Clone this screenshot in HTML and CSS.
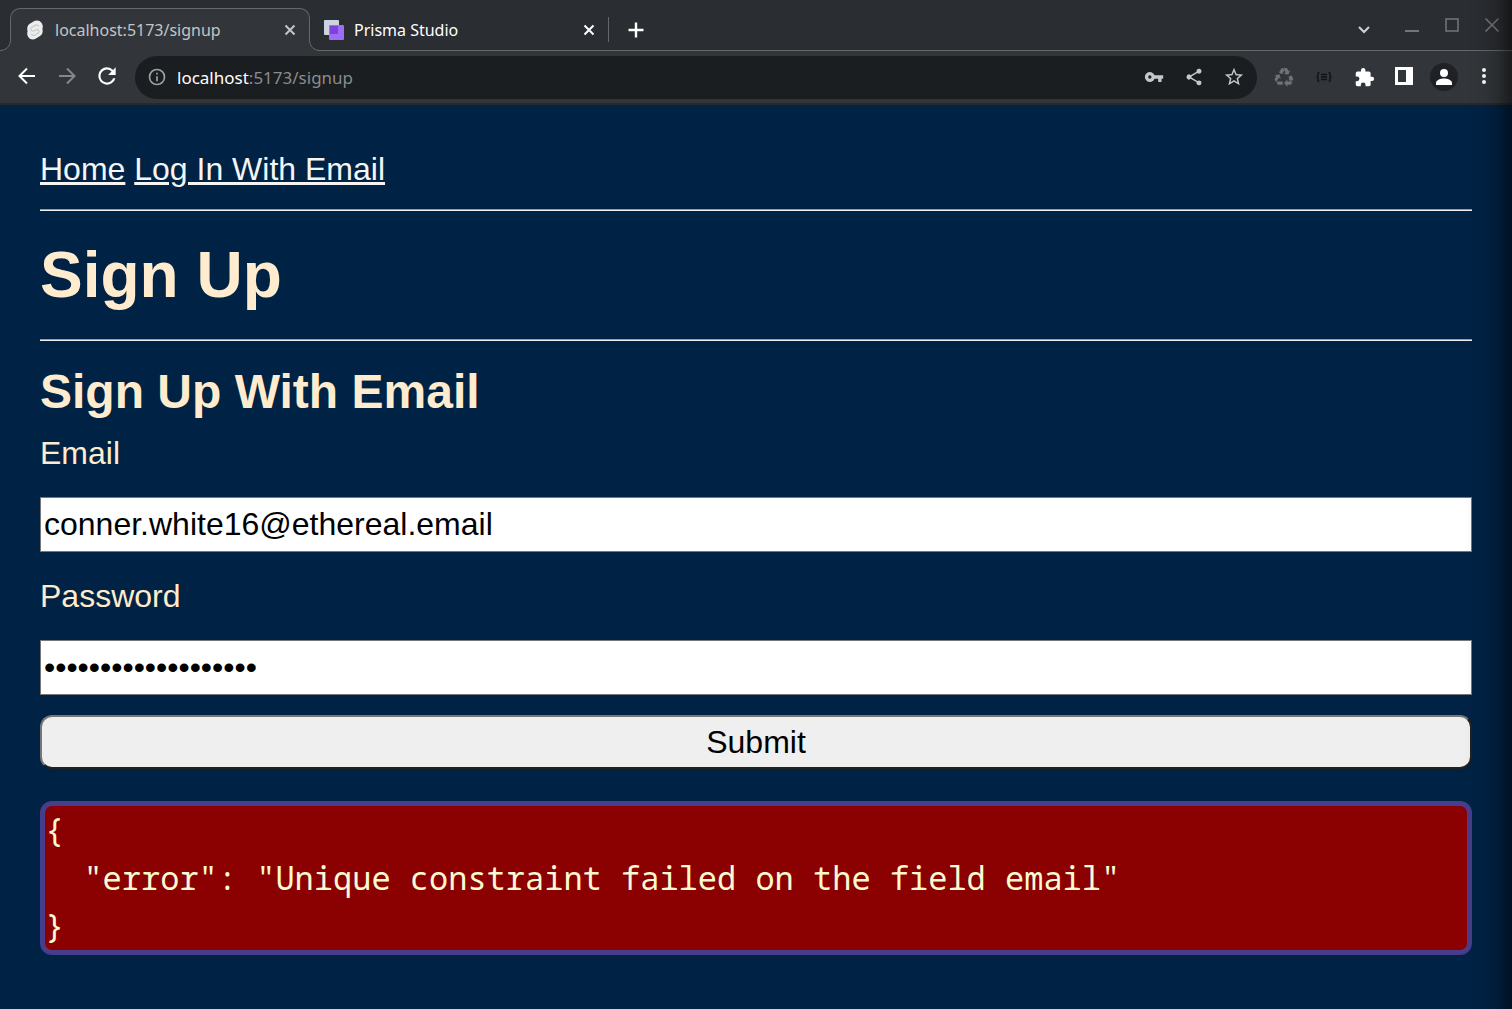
FILE: index.html
```html
<!DOCTYPE html>
<html lang="en">
<head>
<meta charset="utf-8">
<meta name="viewport" content="width=device-width, initial-scale=1">
<title>Sign Up</title>
<link rel="stylesheet" href="styles.css">
</head>
<body>
<div class="window">
  <header class="chrome">
    <div class="tab-strip">
      <div class="tab tab-active">
        <svg class="foot foot-left" width="11" height="11" viewBox="0 0 11 11" aria-hidden="true"><path d="M11 0v11H0v-.5A10 10 0 0 0 10.500 0z" fill="#32363a"/><path d="M0 10.500A10 10 0 0 0 10.500 0" fill="none" stroke="#66696c"/></svg>
        <svg class="foot foot-right" width="11" height="11" viewBox="0 0 11 11" aria-hidden="true"><path d="M0 0v11h11v-.5A10 10 0 0 1 .5 0z" fill="#32363a"/><path d="M11 10.500A10 10 0 0 1 .5 0" fill="none" stroke="#66696c"/></svg>
        <svg class="icon" width="20" height="20" viewBox="0 0 20 20" aria-hidden="true"><path d="M8 1.800C11 0 14.500 0 16.800 3.200c1.200 2 1.200 3.700.6 5.500.5 2.300.6 5.300-2.400 7.300l-4 2.600c-3 1.700-6 1-7.800-1.600-1.200-2-1.200-3.700-.6-5.500C1.900 9 2 6 4.400 4z" fill="#ececec"/><path d="M13.800 6.500c-1-1.700-2.500-2-4-1L7 7.300c-2 1.500-1 3.900 1 3.700 1.800 0 3.500-2.300 5.200-1.200 1.300 1 .8 2.700-.4 3.500L10 15c-1.600.9-3 .5-3.800-1.200" fill="none" stroke="#c8c9ca" stroke-width="1.200"/></svg>
        <span class="tab-title">localhost:5173/signup</span>
        <button class="tab-close" type="button" aria-label="Close localhost tab"><svg width="12" height="12" viewBox="0 0 12 12" stroke="currentColor" stroke-width="2"><path d="M1.500 1.500l9 9M10.500 1.500l-9 9"/></svg></button>
      </div>
      <div class="tab tab-idle">
        <svg class="icon" width="20" height="20" viewBox="0 0 20 20" aria-hidden="true"><rect x="0" y="0" width="15" height="15" rx="1" fill="#cbd5e0"/><rect x="5" y="5" width="15" height="15" rx="1" fill="#9f6cf5"/><path d="M6 6h8v8H6z" fill="#7f40dd"/></svg>
        <span class="tab-title">Prisma Studio</span>
        <button class="tab-close" type="button" aria-label="Close Prisma Studio tab"><svg width="12" height="12" viewBox="0 0 12 12" stroke="currentColor" stroke-width="2"><path d="M1.500 1.500l9 9M10.500 1.500l-9 9"/></svg></button>
      </div>
      <button class="new-tab" type="button" aria-label="New tab"><svg width="16" height="16" viewBox="0 0 16 16" stroke="currentColor" stroke-width="2.400"><path d="M8 .5v15M.5 8h15"/></svg></button>
      <div class="window-controls">
        <button type="button" class="control search-tabs" aria-label="Search tabs"><svg width="20" height="20" viewBox="0 0 20 20" fill="none" stroke="currentColor" stroke-width="2"><path d="M5 12l5 5 5-5"/></svg></button>
        <button type="button" class="control" aria-label="Minimize"><svg width="20" height="20" viewBox="0 0 20 20" stroke="currentColor" stroke-width="2"><path d="M3 16h14"/></svg></button>
        <button type="button" class="control" aria-label="Maximize"><svg width="20" height="20" viewBox="0 0 20 20" fill="none" stroke="currentColor" stroke-width="1.500"><path d="M4 4h12v12H4z"/></svg></button>
        <button type="button" class="control" aria-label="Close window"><svg width="20" height="20" viewBox="0 0 20 20" stroke="currentColor" stroke-width="1.700"><path d="M3.500 3.500l13 13M16.500 3.500l-13 13"/></svg></button>
      </div>
    </div>
    <div class="toolbar">
      <div class="history">
        <button type="button" class="control" aria-label="Back"><svg width="20" height="20" viewBox="0 0 20 20" fill="none" stroke="currentColor" stroke-width="2"><path d="M18 10H3M10 2.500L2.500 10l7.500 7.500"/></svg></button>
        <button type="button" class="control muted" aria-label="Forward"><svg width="20" height="20" viewBox="0 0 20 20" fill="none" stroke="currentColor" stroke-width="2"><path d="M2 10h15M10 2.500l7.500 7.500-7.500 7.500"/></svg></button>
        <button type="button" class="control" aria-label="Reload"><svg width="26" height="26" viewBox="0 0 24 24" fill="currentColor"><path d="M17.650 6.350A7.950 7.950 0 0 0 12 4a8 8 0 1 0 7.730 10h-2.080A6 6 0 1 1 12 6c1.660 0 3.140.69 4.220 1.780L13 11h7V4z"/></svg></button>
      </div>
      <div class="omnibox">
        <svg class="icon" width="20" height="20" viewBox="0 0 24 24" fill="#9aa0a6" aria-hidden="true"><path d="M11 7h2v2h-2zm0 4h2v6h-2zm1-9a10 10 0 1 0 0 20 10 10 0 0 0 0-20zm0 18a8 8 0 1 1 0-16 8 8 0 0 1 0 16z"/></svg>
        <div class="address"><span class="host">localhost</span>:5173/signup</div>
        <button type="button" class="control" aria-label="Passwords"><svg width="20" height="20" viewBox="0 0 24 24" fill="currentColor"><path d="M12.650 10a6 6 0 1 0 0 4H17v4h4v-4h2v-4zM7 14a2 2 0 1 1 0-4 2 2 0 0 1 0 4z"/></svg></button>
        <button type="button" class="control" aria-label="Share"><svg width="20" height="20" viewBox="0 0 24 24" fill="currentColor"><path d="M18 16.080c-.76 0-1.440.3-1.960.77L8.910 12.700a3.300 3.300 0 0 0 0-1.400l7.050-4.110A3 3 0 1 0 15.090 5.700L8.040 9.810a3 3 0 1 0 0 4.380l7.120 4.160A2.920 2.920 0 1 0 18 16.080z"/></svg></button>
        <button type="button" class="control" aria-label="Bookmark"><svg width="22" height="22" viewBox="0 0 24 24" fill="currentColor"><path d="M22 9.240l-7.190-.62L12 2 9.190 8.630 2 9.240l5.460 4.730L5.820 21 12 17.270 18.180 21l-1.630-7.030zM12 15.400l-3.760 2.270 1-4.280-3.320-2.880 4.380-.38L12 6.100l1.710 4.040 4.380.38-3.320 2.880 1 4.280z"/></svg></button>
      </div>
      <div class="extensions">
        <button type="button" class="control recycle" aria-label="Recycle"><svg width="20" height="20" viewBox="0 0 20 20" fill="currentColor"><path d="M5 5.500L7.500 1.200H9L10.500 3 8 7.300zM9.800 1h3l1.700 3 1.700-.8-1.800 4.600-4.800-1 1.900-1zM14.700 9.800l2.600-1.500 2 3.500-.8 1.700-3.300.2zM18.700 14.500l-1.800 3.200h-3.500v2.100L10 16.100l3.400-3.600v2zM8.700 14.600v3.100H4l-1.200-1.600.8-1.500zM2.200 15.300l-1.700-3 1.700-2.900-1.700-1L5.400 7.200l1.400 4.600-1.900-1z"/></svg></button>
        <button type="button" class="control json" aria-label="JSON viewer"><svg width="18" height="14" viewBox="0 0 18 14" fill="none" stroke="currentColor" stroke-width="1.400"><path d="M4.500 2.500H4c-1.500 0-1 1.500-1 3 0 1-.5 1.500-1.500 1.500C2.500 7 3 7.500 3 8.500c0 1.500-.5 3 1 3h.5M13.500 2.500h.5c1.500 0 1 1.500 1 3 0 1 .5 1.500 1.500 1.500-1 0-1.500.5-1.500 1.500 0 1.500.5 3-1 3h-.5M6 4.500h6M6 7h6M6 9.500h6"/></svg></button>
        <button type="button" class="control" aria-label="Extensions"><svg width="21" height="21" viewBox="0 0 24 24" fill="currentColor"><path d="M20.500 11H19V7a2 2 0 0 0-2-2h-4V3.500a2.500 2.500 0 0 0-5 0V5H4a2 2 0 0 0-2 2v3.800h1.500a2.700 2.700 0 0 1 0 5.400H2V20c0 1.100.9 2 2 2h3.800v-1.500a2.700 2.700 0 0 1 5.400 0V22H17a2 2 0 0 0 2-2v-4h1.500a2.500 2.500 0 0 0 0-5z"/></svg></button>
        <button type="button" class="control" aria-label="Side panel"><svg width="20" height="20" viewBox="0 0 20 20"><path d="M1 0h18v18H1z" fill="#fff"/><path d="M4 3h8v12H4z" fill="#32363a"/></svg></button>
        <button type="button" class="control" aria-label="Profile"><svg width="28" height="28" viewBox="0 0 28 28"><circle cx="14" cy="14" r="14" fill="#202124"/><circle cx="14" cy="10" r="4" fill="#fff"/><path d="M6 22v-2c0-3.300 5-4.500 8-4.500s8 1.200 8 4.500v2z" fill="#fff"/></svg></button>
        <button type="button" class="control" aria-label="Menu"><svg width="20" height="20" viewBox="0 0 20 20" fill="currentColor"><circle cx="10" cy="3" r="2"/><circle cx="10" cy="9" r="2"/><circle cx="10" cy="15" r="2"/></svg></button>
      </div>
    </div>
  </header>
  <main class="page">
    <nav class="nav"><a href="#home">Home</a> <a href="#login">Log In With Email</a></nav>
    <hr class="rule">
    <h1 class="title">Sign Up</h1>
    <hr class="rule">
    <h2 class="subtitle">Sign Up With Email</h2>
    <form class="form">
      <label for="email">Email</label>
      <input class="field" id="email" type="email" value="conner.white16@ethereal.email">
      <label for="password">Password</label>
      <input class="field" id="password" type="password" value="abcdefghijklmnopqrs">
      <button class="submit" type="submit">Submit</button>
    </form>
    <pre class="result">{
  "error": "Unique constraint failed on the field email"
}</pre>
  </main>
</div>
</body>
</html>
```
FILE: styles.css
```css
* {
  box-sizing: border-box;
}

body {
  margin: 0;
  background: #002244;
}

.window {
  position: relative;
  min-height: 100vh;
}

/* shade along the right edge of the window */
.window::after {
  content: "";
  position: absolute;
  top: 0;
  right: 0;
  bottom: 0;
  width: 48px;
  background: linear-gradient(to right, rgba(0, 0, 0, 0), rgba(0, 0, 0, 0.05) 40%, rgba(0, 0, 0, 0.18) 70%, rgba(0, 0, 0, 0.5));
  pointer-events: none;
}

.chrome {
  font-family: "Noto Sans", sans-serif;
  color: #fff;
}

.chrome button {
  display: flex;
  align-items: center;
  justify-content: center;
  padding: 0;
  border: 0;
  background: none;
  color: inherit;
}

.chrome svg {
  flex: none;
}

.tab-strip {
  display: flex;
  height: 51px;
  padding: 8px 0 0 10px;
  border-bottom: 1px solid #66696c;
  background: #2a2d31;
}

.tab {
  display: flex;
  align-items: center;
  font-size: 16px;
}

.tab-title {
  flex: 1;
  padding-left: 10px;
}

.tab-active {
  position: relative;
  width: 300px;
  height: 43px;
  padding: 0 13px 0 14px;
  border: 1px solid #66696c;
  border-bottom: 0;
  border-radius: 10px 10px 0 0;
  background: #32363a;
  color: #c3c5c6;
}

/* outward curves at the foot of the active tab */
.foot {
  position: absolute;
  bottom: 0;
}

.foot-left {
  left: -11px;
}

.foot-right {
  right: -11px;
}

.tab-idle {
  width: 299px;
  height: 43px;
  padding: 0 14px;
}

.tab-idle::after {
  content: "";
  width: 1px;
  height: 25px;
  margin: 0 -14px 0 13px;
  background: #66696c;
}

.new-tab {
  width: 54px;
  height: 43px;
}

.window-controls {
  display: flex;
  gap: 20px;
  margin-left: auto;
  padding: 7px 10px 0 0;
  color: #74777a;
}

.control {
  flex: none;
  width: 20px;
  height: 20px;
}

.chrome .search-tabs {
  margin-right: 8px;
  color: #d0d2d3;
}

.toolbar {
  display: flex;
  align-items: center;
  height: 54px;
  padding: 3px 18px 3px 17px;
  border-bottom: 2px solid #27292c;
  background: #32363a;
}

.history,
.extensions {
  display: flex;
  gap: 20px;
}

.history {
  padding-bottom: 3px;
}

.chrome .muted {
  color: #85888b;
}

.omnibox {
  display: flex;
  flex: 1;
  align-items: center;
  gap: 20px;
  height: 43px;
  margin: 0 17px 0 18px;
  padding: 0 13px 0 12px;
  border-radius: 22px;
  background: #1b1e21;
  color: #c5c7c8;
}

.address {
  flex: 1;
  margin-left: -10px;
  font-size: 17px;
  color: #898c8e;
}

.host {
  color: #fff;
}

.chrome .recycle {
  color: #707274;
}

.chrome .json {
  color: #111315;
}

.page {
  padding: 40px;
  font: 32px/48px "Liberation Sans", Arial, sans-serif;
  color: #ffebcd;
}

.nav a {
  color: #f5f5f5;
}

.rule {
  height: 2px;
  margin: 16px 0;
  border: 0;
  border-top: 1px solid #9a9a9a;
  background: #f0f0f0;
}

.title {
  margin: 0;
  font-size: 64px;
  line-height: 96px;
}

.subtitle {
  margin: 0 0 2px;
  font-size: 48px;
  line-height: 70px;
}

.form {
  display: grid;
  gap: 20px;
}

.field {
  width: 100%;
  height: 55px;
  padding: 1px 3px;
  border: 1px solid #767676;
  border-radius: 0;
  background: #fff;
  font: inherit;
  color: #000;
}

.submit {
  height: 54px;
  border: 2px solid;
  border-color: #767676 #212121 #212121 #767676;
  border-radius: 12px;
  background: #efefef;
  font: inherit;
  color: #000;
}

.result {
  margin: 32px 0 0;
  border: 5px solid #483d8b;
  border-radius: 12px;
  background: #8b0000;
  font-family: "Noto Sans Mono", "DejaVu Sans Mono", monospace;
  color: #fafad2;
  white-space: pre-wrap;
}
```
